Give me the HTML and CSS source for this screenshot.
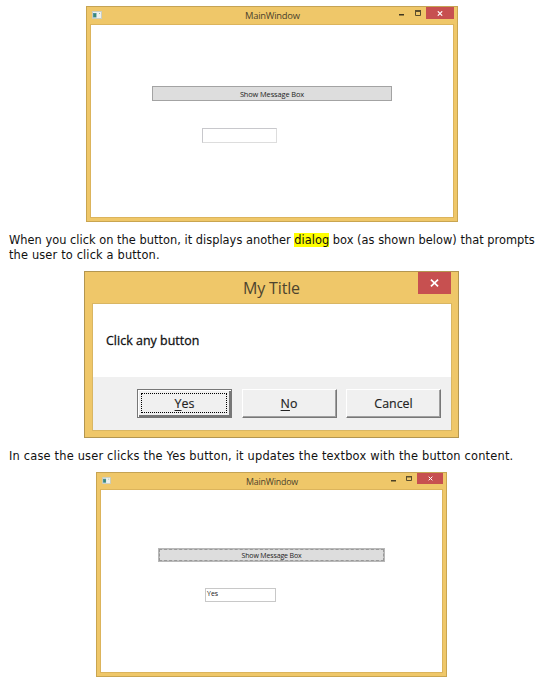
FILE: index.html
```html
<!DOCTYPE html>
<html lang="en">
<head>
<meta charset="utf-8">
<title>Message box</title>
<link rel="stylesheet" href="styles.css">
</head>
<body>
<main class="page">
  <section class="window window-first">
    <header class="titlebar">
      <svg class="app-icon" width="10" height="8" viewBox="0 0 10 8"><rect width="10" height="8" fill="#c9cdc0"/><rect x="1" y="1" width="8" height="6" fill="#eef1ee"/><rect x="1" y="2" width="3.5" height="4.5" fill="#4d91a0"/><rect x="2" y="3" width="2" height="3" fill="#3b8a72"/><rect x="7" y="2" width="1" height="1" fill="#91b9a0"/></svg>
      <span class="title">MainWindow</span>
      <svg class="min" width="5" height="2"><rect width="5" height="1.500" fill="#3f3620"/></svg>
      <svg class="max" width="6" height="6"><path d="M.5 1v4.500h5V1" fill="none" stroke="#5b4e2c"/><path d="M0 1h6" stroke="#5b4e2c" stroke-width="2"/></svg>
      <span class="close"><svg width="6" height="5" viewBox="0 0 6 5"><path d="M.8.3 5.200 4.700M5.200.3.8 4.700" stroke="#fff" stroke-width="1.100"/></svg></span>
    </header>
    <div class="client">
      <div class="show-button"><span>Show Message Box</span></div>
      <div class="textbox"></div>
    </div>
  </section>

  <p class="prose intro"><span class="line line-a">When you click on the button, it displays another <mark>dialog</mark> box (as shown below) that prompts</span><br><span class="line line-b">the user to click a button.</span></p>

  <section class="dialog">
    <header class="dialog-bar">
      <span class="dialog-title">My Title</span>
      <span class="dialog-close"><svg width="9" height="8" viewBox="0 0 10 9"><path d="M1 .7 9 8.300M9 .7 1 8.300" stroke="#fff" stroke-width="1.900"/></svg></span>
    </header>
    <div class="dialog-client">
      <div class="message"><span>Click any button</span></div>
      <div class="actions">
        <div class="action action-default"><span><u>Y</u>es</span></div>
        <div class="action"><span><u>N</u>o</span></div>
        <div class="action"><span>Cancel</span></div>
      </div>
    </div>
  </section>

  <p class="prose outcome"><span class="line line-c">In case the user clicks the Yes button, it updates the textbox with the button content.</span></p>

  <section class="window window-second">
    <header class="titlebar">
      <svg class="app-icon" width="9" height="7" viewBox="0 0 10 8"><rect width="10" height="8" fill="#c9cdc0"/><rect x="1" y="1" width="8" height="6" fill="#eef1ee"/><rect x="1" y="2" width="3.500" height="4.500" fill="#4d91a0"/><rect x="2" y="3" width="2" height="3" fill="#3b8a72"/><rect x="7" y="2" width="1" height="1" fill="#91b9a0"/></svg>
      <span class="title">MainWindow</span>
      <svg class="min" width="5" height="2"><rect width="5" height="1.500" fill="#4b4025"/></svg>
      <svg class="max" width="6" height="5"><path d="M.5 1v3.500h5V1" fill="none" stroke="#5b4e2c"/><path d="M0 .75h6" stroke="#5b4e2c" stroke-width="1.500"/></svg>
      <span class="close"><svg width="5" height="5" viewBox="0 0 6 5"><path d="M.8.3 5.200 4.700M5.200.3.8 4.700" stroke="#fff" stroke-width="1.200"/></svg></span>
    </header>
    <div class="client">
      <div class="show-button focused"><span>Show Message Box</span></div>
      <div class="textbox"><span>Yes</span></div>
    </div>
  </section>
</main>
</body>
</html>
```
FILE: styles.css
```css
* { box-sizing: border-box; }
body { margin: 0; background: #fff; overflow: hidden; }
svg { display: block; flex: none; }
.page { width: 548px; height: 678px; padding-top: 6px; }

.window, .dialog { font-family: "Open Sans", "Noto Sans", sans-serif; background: #efc769; }
.window { border: 1px solid #c9a550; border-top-color: #c5a354; }
.window-first { width: 372px; height: 216px; margin-left: 86px; padding: 0 3px 3px; }
.window-second { width: 351px; height: 205px; margin-left: 96px; padding: 0 3px 3px; }
.titlebar { display: flex; align-items: flex-start; height: 17px; white-space: nowrap; }
.app-icon { margin: 4px 0 0 2px; }
.title { font-size: 9.4px; letter-spacing: -.25px; line-height: 14px; color: #4c432d; margin: 2px 0 0 143px; width: 54px; }
.min { margin: 7px 0 0 100px; }
.max { margin: 3px 0 0 11px; }
.close { display: flex; align-items: center; justify-content: center; width: 28px; height: 12px; margin-left: 5px; background: #c75050; }
.client { border: 1px solid #dcb45c; background: #fff; }
.window-first .client { width: 364px; height: 194px; padding-top: 61px; }
.show-button { display: flex; align-items: center; justify-content: center; width: 240px; height: 15px; margin-left: 61px; border: 1px solid #a3a3a3; background: #ddd; font-size: 7.4px; letter-spacing: -.1px; line-height: 10px; color: #222; white-space: nowrap; }
.textbox { width: 75px; height: 15px; margin: 27px 0 0 111px; border: 1px solid #c8c8cc; border-right-color: #ddd; border-bottom-color: #ddd; font-size: 7px; line-height: 10px; color: #222; padding-left: 1px; }

.window-second .titlebar { height: 16px; }
.window-second .title { font-size: 8.9px; letter-spacing: -.22px; line-height: 14px; margin: 2px 0 0 135px; width: 52px; }
.window-second .min { margin: 7px 0 0 93px; }
.window-second .max { margin: 3px 0 0 10px; }
.window-second .close { width: 26px; height: 11px; margin-left: 5px; }
.window-second .client { width: 343px; height: 184px; padding-top: 58px; }
.window-second .show-button { width: 227px; height: 14px; margin-left: 57px; font-size: 7px; letter-spacing: -.15px; padding-top: 1px; }
.show-button.focused { border: 1px solid #b8b8b8; outline: 1px dashed #999; outline-offset: -2px; box-shadow: inset 0 0 0 1px #c4c4c4; }
.window-second .textbox { width: 71px; height: 14px; margin: 26px 0 0 104px; border-color: #c8c8c8; }

.prose { margin: 0; padding-left: 9px; font-family: "DejaVu Sans", sans-serif; font-size: 11.4px; line-height: 15px; color: #111; white-space: nowrap; }
.intro { height: 49px; padding-top: 11px; }
.outcome { height: 34px; padding-top: 11px; }
.line-a { letter-spacing: .02px; }
.line-b { letter-spacing: .15px; }
.line-c { letter-spacing: .195px; }
mark { background: #ff0; color: inherit; }

.dialog { width: 375px; height: 167px; margin-left: 84px; border: 1px solid #b39650; }
.dialog-bar { display: flex; justify-content: flex-end; align-items: flex-start; height: 31px; padding-right: 7px; }
.dialog-title { font-size: 16px; letter-spacing: -.15px; line-height: 22px; color: #4d442e; width: 59px; margin: 5px 116px 0 0; white-space: nowrap; }
.dialog-close { display: flex; align-items: center; justify-content: center; width: 33px; height: 22px; background: #c75050; }
.dialog-client { width: 360px; height: 128px; margin-left: 7px; border: 1px solid #d9b663; background: #f0f0f0; }
.message { height: 73px; padding: 28px 0 0 13px; background: #fff; font-size: 12.4px; letter-spacing: .04px; line-height: 18px; color: #111; -webkit-text-stroke: .3px #111; white-space: nowrap; }
.actions { display: flex; gap: 9.5px; padding: 12px 0 0 44px; }
.action { display: flex; align-items: center; justify-content: center; width: 95px; height: 29px; border: 1px solid; border-color: #fff #777 #777 #fff; box-shadow: inset -1px -1px #a0a0a0; font-size: 12.4px; line-height: 18px; color: #222; -webkit-text-stroke: .15px #222; }
.action-default { border-color: #777; box-shadow: inset 1px 1px #fff, inset -2px -2px #777; position: relative; }
.action-default::after { content: ""; position: absolute; inset: 3px 4px 4px 3px; border: 1px dotted #000; }
.action u { text-underline-offset: 2px; }
```
